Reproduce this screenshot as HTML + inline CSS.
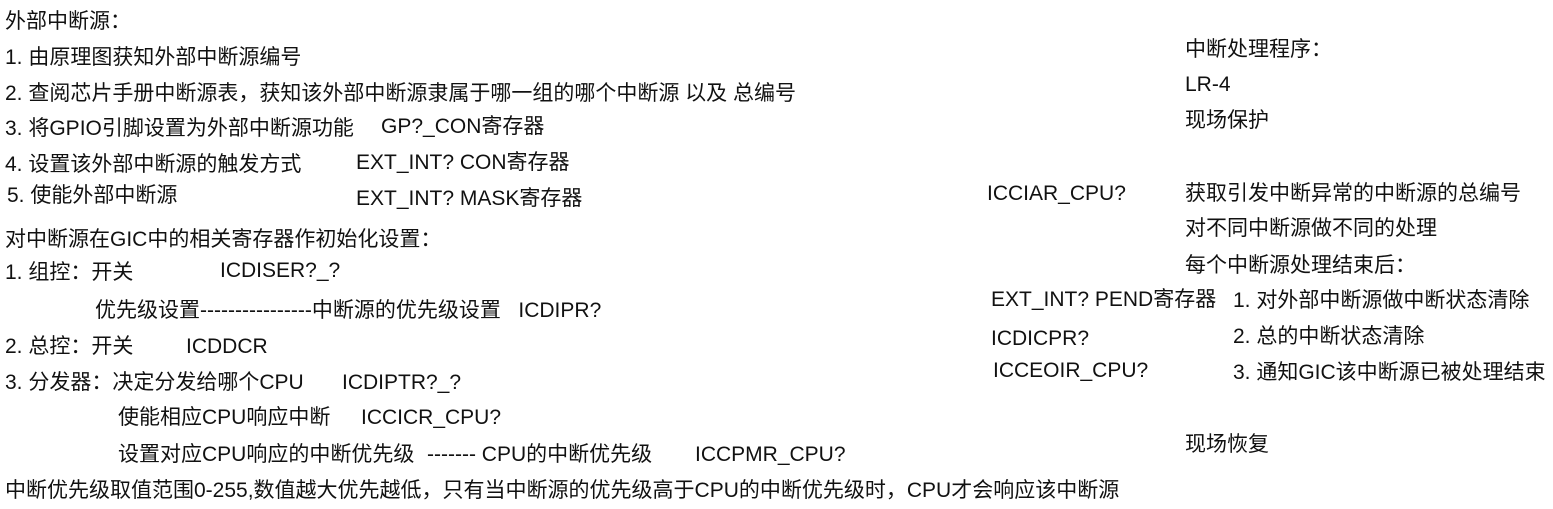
<!DOCTYPE html>
<html><head><meta charset="utf-8"><style>
body{margin:0;width:1553px;height:509px;background:#fff;position:relative;overflow:hidden;font-family:"Liberation Sans","Noto Sans CJK SC",sans-serif;font-size:21px;color:#111}
div{position:absolute;white-space:pre;line-height:24px}
</style></head><body>
<div style="left:5px;top:10px">外部中断源：</div>
<div style="left:5px;top:46px">1. 由原理图获知外部中断源编号</div>
<div style="left:5px;top:82px">2. 查阅芯片手册中断源表，获知该外部中断源隶属于哪一组的哪个中断源 以及 总编号</div>
<div style="left:5px;top:117px">3. 将GPIO引脚设置为外部中断源功能</div>
<div style="left:381px;top:115px">GP?_CON寄存器</div>
<div style="left:5px;top:153px">4. 设置该外部中断源的触发方式</div>
<div style="left:356px;top:151px">EXT_INT? CON寄存器</div>
<div style="left:7px;top:184px">5. 使能外部中断源</div>
<div style="left:356px;top:187px">EXT_INT? MASK寄存器</div>
<div style="left:5px;top:228px">对中断源在GIC中的相关寄存器作初始化设置：</div>
<div style="left:5px;top:261px">1. 组控：开关</div>
<div style="left:220px;top:259px">ICDISER?_?</div>
<div style="left:95px;top:299px">优先级设置----------------中断源的优先级设置   ICDIPR?</div>
<div style="left:5px;top:335px">2. 总控：开关</div>
<div style="left:186px;top:335px">ICDDCR</div>
<div style="left:5px;top:371px">3. 分发器：决定分发给哪个CPU</div>
<div style="left:342px;top:371px">ICDIPTR?_?</div>
<div style="left:118px;top:406px">使能相应CPU响应中断</div>
<div style="left:361px;top:406px">ICCICR_CPU?</div>
<div style="left:118px;top:443px">设置对应CPU响应的中断优先级</div>
<div style="left:427px;top:443px">------- CPU的中断优先级</div>
<div style="left:695px;top:443px">ICCPMR_CPU?</div>
<div style="left:5px;top:479px">中断优先级取值范围0-255,数值越大优先越低，只有当中断源的优先级高于CPU的中断优先级时，CPU才会响应该中断源</div>
<div style="left:1185px;top:38px">中断处理程序：</div>
<div style="left:1185px;top:73px">LR-4</div>
<div style="left:1185px;top:109px">现场保护</div>
<div style="left:987px;top:182px">ICCIAR_CPU?</div>
<div style="left:1185px;top:182px">获取引发中断异常的中断源的总编号</div>
<div style="left:1185px;top:217px">对不同中断源做不同的处理</div>
<div style="left:1185px;top:254px">每个中断源处理结束后：</div>
<div style="left:991px;top:288px">EXT_INT? PEND寄存器</div>
<div style="left:1233px;top:289px">1. 对外部中断源做中断状态清除</div>
<div style="left:991px;top:327px">ICDICPR?</div>
<div style="left:1233px;top:325px">2. 总的中断状态清除</div>
<div style="left:993px;top:359px">ICCEOIR_CPU?</div>
<div style="left:1233px;top:361px">3. 通知GIC该中断源已被处理结束</div>
<div style="left:1185px;top:433px">现场恢复</div>
</body></html>
